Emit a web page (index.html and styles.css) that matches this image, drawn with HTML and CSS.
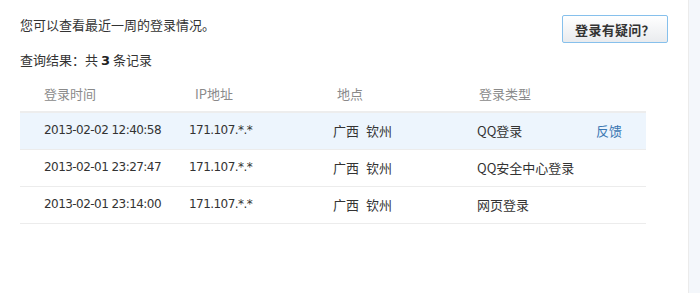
FILE: index.html
```html
<!DOCTYPE html>
<html lang="zh-CN">
<head>
<meta charset="utf-8">
<title>登录记录</title>
<link rel="stylesheet" href="styles.css">
</head>
<body>
<div class="page">
  <main class="main">
    <div class="top">
      <p class="intro">您可以查看最近一周的登录情况。</p>
      <button class="ask">登录有疑问？</button>
    </div>
    <p class="summary">查询结果：共 <b class="count">3</b> 条记录</p>
    <div class="table">
      <div class="row head">
        <div class="cell">登录时间</div>
        <div class="cell shift6">IP地址</div>
        <div class="cell shift4">地点</div>
        <div class="cell shift1">登录类型</div>
        <div class="cell"></div>
      </div>
      <div class="row item active">
        <div class="cell num">2013-02-02 12:40:58</div>
        <div class="cell num">171.107.*.*</div>
        <div class="cell"><span class="prov">广西</span>钦州</div>
        <div class="cell">QQ登录</div>
        <div class="cell"><a class="fb" href="#">反馈</a></div>
      </div>
      <div class="row item">
        <div class="cell num">2013-02-01 23:27:47</div>
        <div class="cell num">171.107.*.*</div>
        <div class="cell"><span class="prov">广西</span>钦州</div>
        <div class="cell">QQ安全中心登录</div>
        <div class="cell"></div>
      </div>
      <div class="row item">
        <div class="cell num">2013-02-01 23:14:00</div>
        <div class="cell num">171.107.*.*</div>
        <div class="cell"><span class="prov">广西</span>钦州</div>
        <div class="cell">网页登录</div>
        <div class="cell"></div>
      </div>
    </div>
  </main>
  <aside class="side"></aside>
</div>
</body>
</html>
```

FILE: styles.css
```css
html, body {
  margin: 0;
  padding: 0;
  background: #fff;
}
body {
  font-family: "DejaVu Sans", "Noto Sans CJK SC", sans-serif;
  font-size: 13px;
  color: #333;
}
.page {
  display: flex;
  min-height: 293px;
}
.main {
  width: 648px;
  padding: 0 20px;
  flex: none;
}
.side {
  flex: 1;
  border-left: 1px solid #ebebeb;
  background: #f4f7fb;
}
.top {
  display: flex;
  justify-content: space-between;
  align-items: flex-start;
  padding-top: 15px;
}
.intro {
  margin: 1px 0 0;
  line-height: 18px;
  font-family: "Noto Sans CJK SC", sans-serif;
}
.ask {
  width: 106px;
  height: 28px;
  margin: 0;
  padding: 0;
  border: 1px solid #86c0ec;
  border-radius: 2px;
  background: linear-gradient(#ffffff, #e9ebee);
  font-family: "Noto Sans CJK SC", sans-serif;
  font-size: 13px;
  font-weight: bold;
  color: #333;
  letter-spacing: 0.3px;
}
.summary {
  margin: 8px 0 0;
  line-height: 18px;
  font-family: "Noto Sans CJK SC", sans-serif;
}
.count {
  font-family: "DejaVu Sans", sans-serif;
  font-size: 13px;
  color: #222;
}
.table {
  margin-top: 5px;
  width: 626px;
}
.row {
  display: grid;
  grid-template-columns: 145px 144px 144px 119px 1fr;
  align-items: center;
}
.cell {
  padding-left: 24px;
  white-space: nowrap;
  font-family: "Noto Sans CJK SC", sans-serif;
}
.head {
  height: 36px;
  color: #8a8a8a;
  border-bottom: 2px solid #ededed;
}
.shift6 { padding-left: 30px; }
.shift4 { padding-left: 28px; }
.shift1 { padding-left: 26px; }
.item {
  height: 36px;
  border-bottom: 1px solid #ececec;
}
.item .cell {
  padding-bottom: 2px;
}
.active {
  background: #edf5fd;
}
.num {
  font-family: "DejaVu Sans", sans-serif;
  font-size: 12px;
  letter-spacing: -0.55px;
  color: #333;
}
.prov {
  margin-right: 7px;
}
.fb {
  color: #3b77b3;
  text-decoration: none;
}
```
